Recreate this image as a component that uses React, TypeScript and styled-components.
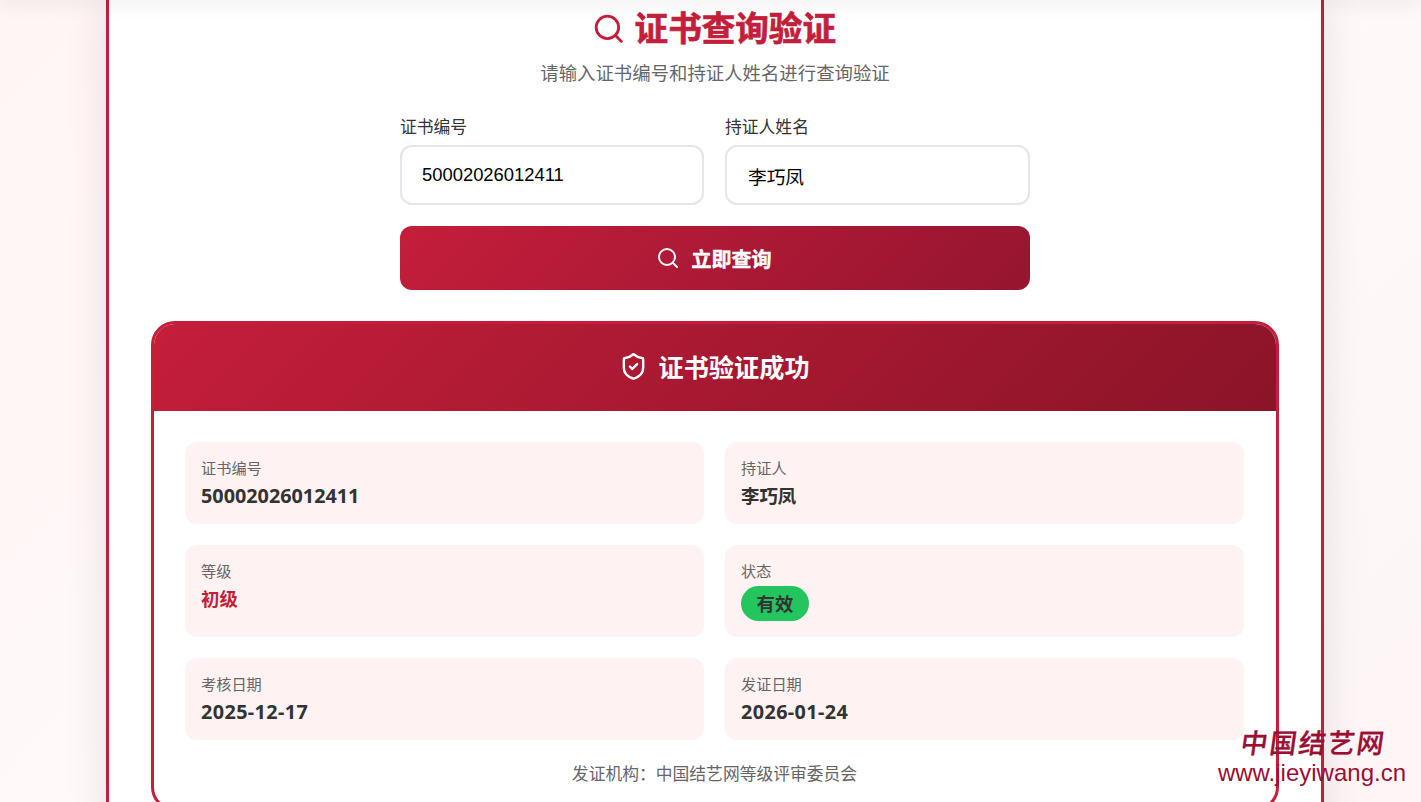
import React from "react"
import styled, { createGlobalStyle } from "styled-components"
import { Search, ShieldCheck } from "lucide-react"

const CJK = `"Noto Sans CJK SC", "Noto Sans", sans-serif`
const LATIN_CJK = `"Noto Sans", "Noto Sans CJK SC", sans-serif`
const ARIAL_CJK = `"Liberation Sans", "Noto Sans CJK SC", sans-serif`

const GlobalStyle = createGlobalStyle`
  html, body {
    margin: 0;
    height: 100%;
    overflow: hidden;
  }
  * {
    box-sizing: border-box;
  }
`

const Page = styled.div`
  position: relative;
  height: 100vh;
  overflow: hidden;
  padding-left: 9px;
  display: flex;
  justify-content: center;
  align-items: flex-start;
  background: linear-gradient(135deg, #fff5f4 0%, #fffafa 50%, #fdf5f6 100%);
  font-family: ${CJK};
`

const TopShade = styled.div`
  position: absolute;
  top: -10px;
  left: 0;
  right: 0;
  height: 10px;
  box-shadow: 0 2px 20px rgba(0, 0, 0, 0.1);
  z-index: 2;
`

const Card = styled.main`
  width: 1218px;
  min-height: 1000px;
  flex: none;
  background: #fff;
  border-left: 3px solid #c41e3a;
  border-right: 3px solid #c41e3a;
  box-shadow: 0 0 40px rgba(0, 0, 0, 0.1);
  padding: 1px 42px 0;
`

const Title = styled.h1`
  margin: 0;
  padding-right: 2px;
  display: flex;
  justify-content: center;
  align-items: center;
  gap: 9px;
  height: 50px;
  font-size: 33.6px;
  font-weight: 700;
  -webkit-text-stroke: 0.7px #c41e3a;
  color: #c41e3a;

  svg {
    margin-top: 6px;
    -webkit-text-stroke: 0;
  }
`

const Subtitle = styled.p`
  margin: 8px 0 0;
  text-align: center;
  font-size: 18.4px;
  line-height: 27px;
  color: #666;
`

const Form = styled.form`
  width: 630px;
  margin: 28px auto 0;
`

const FieldRow = styled.div`
  display: grid;
  grid-template-columns: 304px 305px;
  gap: 21px;
`

const Field = styled.label`
  display: block;
`

const FieldLabel = styled.span`
  display: block;
  font-size: 16.8px;
  line-height: 25px;
  color: #333;
  margin-bottom: 6px;
`

const Input = styled.input<{ $cjk?: boolean }>`
  display: block;
  width: 100%;
  height: 60px;
  padding: 0 20px 0 ${(p) => (p.$cjk ? "21px" : "20px")};
  border: 2px solid #e5e5ea;
  border-radius: 12px;
  background: #fff;
  font-family: ${ARIAL_CJK};
  font-size: ${(p) => (p.$cjk ? "18.7px" : "18.4px")};
  color: #000;
  outline: none;
`

const SubmitButton = styled.button`
  width: 100%;
  height: 64px;
  margin-top: 21px;
  padding: 0 3px 0 0;
  border: 0;
  border-radius: 12px;
  background: linear-gradient(135deg, #c41e3a, #961530);
  color: #fff;
  font-family: ${CJK};
  font-size: 20px;
  font-weight: 700;
  -webkit-text-stroke: 0.4px #fff;
  display: flex;
  justify-content: center;
  align-items: center;
  gap: 12px;
`

const Result = styled.section`
  margin-top: 31px;
  border: 3px solid #c41e3a;
  border-radius: 24px;
  overflow: hidden;
  background: #fff;
`

const ResultHeader = styled.header`
  height: 87px;
  padding: 0 1px 3px 0;
  display: flex;
  justify-content: center;
  align-items: center;
  gap: 10px;
  background: linear-gradient(135deg, #c41e3a, #8b1428);
  color: #fff;
  font-size: 25.2px;
  font-weight: 700;
`

const ResultBody = styled.div`
  padding: 31px 32px 22px 31px;
`

const InfoGrid = styled.div`
  display: grid;
  grid-template-columns: 1fr 1fr;
  gap: 21px;
`

const InfoCell = styled.div<{ $tall?: boolean }>`
  height: ${(p) => (p.$tall ? "92px" : "82px")};
  padding: 14px 16px 0;
  border-radius: 12px;
  background: #fef2f2;
`

const InfoLabel = styled.div`
  font-size: 15.2px;
  line-height: 22px;
  color: #666;
  margin-bottom: 4px;
`

const InfoValue = styled.div<{ $accent?: boolean; $cjk?: boolean; $date?: boolean }>`
  font-family: ${LATIN_CJK};
  font-size: ${(p) => (p.$cjk ? "18.4px" : "19.8px")};
  letter-spacing: ${(p) => (p.$date ? "0.4px" : "0")};
  line-height: 28px;
  font-weight: 700;
  color: ${(p) => (p.$accent ? "#c41e3a" : "#333")};
`

const StatusBadge = styled.span`
  display: inline-block;
  margin-top: 1px;
  height: 35px;
  padding: 0 15.5px;
  border-radius: 18px;
  background: #22c55e;
  font-size: 18.4px;
  line-height: 35px;
  font-weight: 700;
  color: #333;
`

const Issuer = styled.p`
  margin: 21px 0 0;
  text-align: center;
  font-size: 16.8px;
  line-height: 25px;
  color: #666;
`

const Watermark = styled.div`
  position: absolute;
  right: 15px;
  bottom: 17px;
  z-index: 3;
  width: 200px;
  text-align: right;
  color: #9b0f33;
`

const WatermarkName = styled.div`
  font-size: 27px;
  line-height: 32px;
  font-weight: 500;
  letter-spacing: 2px;
  -webkit-text-stroke: 0.3px #9b0f33;
  transform: skewX(-8deg);
  margin: 0 20px 2px 0;
  white-space: nowrap;
`

const WatermarkUrl = styled.div`
  font-family: "Liberation Sans", sans-serif;
  font-size: 24px;
  line-height: 25px;
  white-space: nowrap;
`

export default function App() {
  return (
    <Page>
      <GlobalStyle />
      <TopShade />
      <Card>
        <Title>
          <Search size={33.6} strokeWidth={2} />
          证书查询验证
        </Title>
        <Subtitle>请输入证书编号和持证人姓名进行查询验证</Subtitle>
        <Form onSubmit={(e) => e.preventDefault()}>
          <FieldRow>
            <Field>
              <FieldLabel>证书编号</FieldLabel>
              <Input defaultValue="50002026012411" />
            </Field>
            <Field>
              <FieldLabel>持证人姓名</FieldLabel>
              <Input $cjk defaultValue="李巧凤" />
            </Field>
          </FieldRow>
          <SubmitButton type="submit">
            <Search size={24} strokeWidth={2} />
            立即查询
          </SubmitButton>
        </Form>
        <Result>
          <ResultHeader>
            <ShieldCheck size={29} strokeWidth={2} />
            证书验证成功
          </ResultHeader>
          <ResultBody>
            <InfoGrid>
              <InfoCell>
                <InfoLabel>证书编号</InfoLabel>
                <InfoValue>50002026012411</InfoValue>
              </InfoCell>
              <InfoCell>
                <InfoLabel>持证人</InfoLabel>
                <InfoValue $cjk>李巧凤</InfoValue>
              </InfoCell>
              <InfoCell $tall>
                <InfoLabel>等级</InfoLabel>
                <InfoValue $cjk $accent>初级</InfoValue>
              </InfoCell>
              <InfoCell $tall>
                <InfoLabel>状态</InfoLabel>
                <StatusBadge>有效</StatusBadge>
              </InfoCell>
              <InfoCell>
                <InfoLabel>考核日期</InfoLabel>
                <InfoValue $date>2025-12-17</InfoValue>
              </InfoCell>
              <InfoCell>
                <InfoLabel>发证日期</InfoLabel>
                <InfoValue $date>2026-01-24</InfoValue>
              </InfoCell>
            </InfoGrid>
            <Issuer>发证机构：中国结艺网等级评审委员会</Issuer>
          </ResultBody>
        </Result>
      </Card>
      <Watermark>
        <WatermarkName>中国结艺网</WatermarkName>
        <WatermarkUrl>www.jieyiwang.cn</WatermarkUrl>
      </Watermark>
    </Page>
  )
}
